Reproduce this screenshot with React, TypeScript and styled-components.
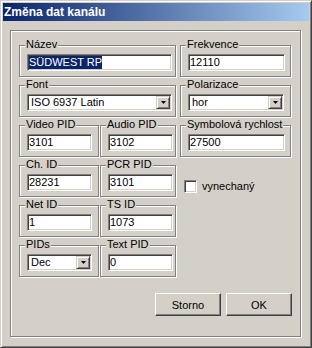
import styled, { createGlobalStyle } from "styled-components";

const GlobalStyle = createGlobalStyle`
  html, body {
    margin: 0;
    padding: 0;
    background: #d4d0c8;
  }
  body {
    font-family: "Liberation Sans", Arial, sans-serif;
    font-size: 11px;
    color: #000;
  }
`;

const Window = styled.div`
  box-sizing: border-box;
  width: 312px;
  height: 348px;
  padding: 2px;
  background: #d4d0c8;
  border: 1px solid;
  border-color: #d4d0c8 #404040 #404040 #d4d0c8;
  box-shadow: inset 1px 1px 0 #fff, inset -1px -1px 0 #808080;
  display: flex;
  flex-direction: column;
`;

const TitleBar = styled.div`
  height: 18px;
  padding-left: 1px;
  background: linear-gradient(to right, #0a246a, #a6caf0);
  color: #fff;
  font-size: 12px;
  font-weight: bold;
  line-height: 18px;
  white-space: nowrap;
`;

const Body = styled.div`
  padding: 9px 0 0 7px;
`;

const Frame = styled.div`
  box-sizing: border-box;
  width: 291px;
  height: 307px;
  padding: 14px 0 0 8px;
  border: 1px solid #808080;
  box-shadow: inset 1px 1px 0 #fff, 1px 1px 0 #fff;
`;

const Columns = styled.div`
  display: flex;
  gap: 4px;
`;

const LeftGrid = styled.div`
  display: grid;
  grid-template-columns: 80px 76px;
  grid-auto-rows: 32px;
  column-gap: 1px;
  row-gap: 8px;
`;

const RightCol = styled.div`
  width: 111px;
  display: flex;
  flex-direction: column;
  gap: 8px;
`;

const Group = styled.div<{ $wide?: boolean }>`
  position: relative;
  box-sizing: border-box;
  height: 32px;
  padding: 8px 0 0 7px;
  border: 1px solid #808080;
  box-shadow: inset 1px 1px 0 #fff, 1px 1px 0 #fff;
  grid-column: ${(p) => (p.$wide ? "span 2" : "auto")};
`;

const Legend = styled.span`
  position: absolute;
  top: -8px;
  left: 5px;
  padding: 0 1px;
  background: #d4d0c8;
  line-height: 13px;
  white-space: nowrap;
`;

const TextBox = styled.div<{ $w: number }>`
  box-sizing: border-box;
  width: ${(p) => p.$w}px;
  height: 17px;
  padding: 1px 1px;
  background: #fff;
  border: 1px solid;
  border-color: #808080 #fff #fff #808080;
  box-shadow: inset 1px 1px 0 #404040, inset -1px -1px 0 #d4d0c8;
  line-height: 13px;
  white-space: nowrap;
  overflow: hidden;
`;

const Selected = styled.span`
  display: inline-block;
  background: #0a246a;
  color: #fff;
`;

const Select = styled.div<{ $w: number }>`
  box-sizing: border-box;
  width: ${(p) => p.$w}px;
  height: 17px;
  padding: 1px;
  display: flex;
  background: #fff;
  border: 1px solid;
  border-color: #808080 #fff #fff #808080;
  box-shadow: inset 1px 1px 0 #404040, inset -1px -1px 0 #d4d0c8;
`;

const SelectValue = styled.span`
  flex: 1;
  padding-left: 2px;
  line-height: 13px;
  white-space: nowrap;
  overflow: hidden;
`;

const DropButton = styled.span`
  box-sizing: border-box;
  width: 14px;
  height: 13px;
  display: flex;
  align-items: center;
  justify-content: center;
  background: #d4d0c8;
  border: 1px solid;
  border-color: #d4d0c8 #404040 #404040 #d4d0c8;
  box-shadow: inset 1px 1px 0 #fff, inset -1px -1px 0 #808080;
`;

const CheckRow = styled.label`
  display: flex;
  align-items: center;
  gap: 5px;
  padding: 15px 0 0 4px;
  line-height: 13px;
`;

const CheckBox = styled.span`
  box-sizing: border-box;
  width: 13px;
  height: 13px;
  background: #fff;
  border: 1px solid;
  border-color: #808080 #fff #fff #808080;
  box-shadow: inset 1px 1px 0 #404040, inset -1px -1px 0 #d4d0c8;
`;

const Footer = styled.div`
  display: flex;
  justify-content: flex-end;
  gap: 5px;
  margin-top: 16px;
  padding-right: 8px;
`;

const Button = styled.button`
  box-sizing: border-box;
  width: 66px;
  height: 23px;
  padding: 0;
  background: #d4d0c8;
  border: 1px solid;
  border-color: #fff #404040 #404040 #fff;
  box-shadow: inset -1px -1px 0 #808080, inset 1px 1px 0 #d4d0c8;
  font-family: "Liberation Sans", Arial, sans-serif;
  font-size: 11px;
  color: #000;
`;

const Arrow = () => (
  <svg width="5" height="3" viewBox="0 0 5 3">
    <polygon points="0,0 5,0 2.5,3" fill="#000" />
  </svg>
);

type FieldProps = { label: string; value: string; w: number; wide?: boolean };

const Field = ({ label, value, w, wide }: FieldProps) => (
  <Group $wide={wide}>
    <Legend>{label}</Legend>
    <TextBox $w={w}>{value}</TextBox>
  </Group>
);

const Combo = ({ label, value, w, wide }: FieldProps) => (
  <Group $wide={wide}>
    <Legend>{label}</Legend>
    <Select $w={w}>
      <SelectValue>{value}</SelectValue>
      <DropButton>
        <Arrow />
      </DropButton>
    </Select>
  </Group>
);

export default function App() {
  return (
    <>
      <GlobalStyle />
      <Window>
        <TitleBar>Změna dat kanálu</TitleBar>
        <Body>
          <Frame>
            <Columns>
              <LeftGrid>
                <Group $wide>
                  <Legend>Název</Legend>
                  <TextBox $w={145}>
                    <Selected>SÜDWEST RP</Selected>
                  </TextBox>
                </Group>
                <Combo label="Font" value="ISO 6937 Latin" w={145} wide />
                <Field label="Video PID" value="3101" w={65} />
                <Field label="Audio PID" value="3102" w={65} />
                <Field label="Ch. ID" value="28231" w={65} />
                <Field label="PCR PID" value="3101" w={65} />
                <Field label="Net ID" value="1" w={65} />
                <Field label="TS ID" value="1073" w={65} />
                <Combo label="PIDs" value="Dec" w={65} />
                <Field label="Text PID" value="0" w={65} />
              </LeftGrid>
              <RightCol>
                <Field label="Frekvence" value="12110" w={97} />
                <Combo label="Polarizace" value="hor" w={96} />
                <Field label="Symbolová rychlost" value="27500" w={97} />
                <CheckRow>
                  <CheckBox />
                  vynechaný
                </CheckRow>
              </RightCol>
            </Columns>
            <Footer>
              <Button>Storno</Button>
              <Button>OK</Button>
            </Footer>
          </Frame>
        </Body>
      </Window>
    </>
  );
}
